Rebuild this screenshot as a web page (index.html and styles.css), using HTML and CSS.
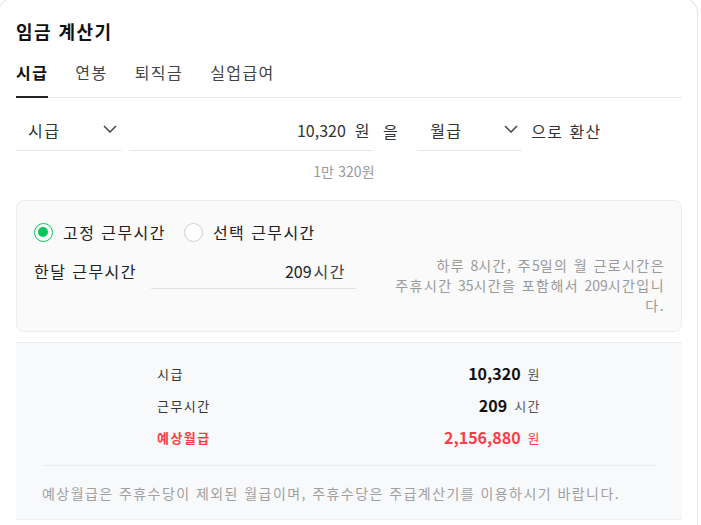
FILE: index.html
```html
<!DOCTYPE html>
<html lang="ko">
<head>
<meta charset="utf-8">
<title>임금 계산기</title>
<link rel="stylesheet" href="styles.css">
</head>
<body>
<div class="card">
  <h1 class="title">임금 계산기</h1>
  <nav class="tabs">
    <span class="tab active">시급</span>
    <span class="tab">연봉</span>
    <span class="tab">퇴직금</span>
    <span class="tab">실업급여</span>
  </nav>

  <div class="convert">
    <div class="select sel-from">
      <span>시급</span>
      <svg class="chev" width="14" height="8" viewBox="0 0 14 8"><path d="M1 1 L7 7 L13 1" fill="none" stroke="#444" stroke-width="1.5"/></svg>
    </div>
    <div class="amount">
      <span class="num">10,320</span>
      <span class="unit">원</span>
    </div>
    <span class="particle">을</span>
    <div class="select sel-to">
      <span>월급</span>
      <svg class="chev" width="14" height="8" viewBox="0 0 14 8"><path d="M1 1 L7 7 L13 1" fill="none" stroke="#444" stroke-width="1.5"/></svg>
    </div>
    <span class="suffix">으로 환산</span>
  </div>
  <div class="korean"><span class="num">1</span>만 <span class="num">320</span>원</div>

  <div class="hours">
    <div class="radios">
      <label class="radio"><span class="dot on"></span>고정 근무시간</label>
      <label class="radio"><span class="dot"></span>선택 근무시간</label>
    </div>
    <div class="hours-row">
      <span class="hours-label">한달 근무시간</span>
      <div class="hours-input">
        <span class="num">209</span>
        <span class="unit">시간</span>
      </div>
      <p class="help">하루 <span class="num">8</span>시간, 주<span class="num">5</span>일의 월 근로시간은<br>주휴시간 <span class="num">35</span>시간을 포함해서 <span class="num">209</span>시간입니다.</p>
    </div>
  </div>

  <div class="summary">
    <div class="rows">
      <div class="row"><span class="lbl">시급</span><span class="val">10,320</span><span class="u">원</span></div>
      <div class="row"><span class="lbl">근무시간</span><span class="val">209</span><span class="u">시간</span></div>
      <div class="row red"><span class="lbl">예상월급</span><span class="val">2,156,880</span><span class="u">원</span></div>
    </div>
    <p class="note">예상월급은 주휴수당이 제외된 월급이며, 주휴수당은 주급계산기를 이용하시기 바랍니다.</p>
  </div>
</div>
</body>
</html>
```

FILE: styles.css
```css
* { box-sizing: border-box; }
html, body { margin: 0; padding: 0; background: #fff; }
body {
  font-family: "Noto Sans CJK KR", "Noto Sans", sans-serif;
  color: #222;
  letter-spacing: 0.09em;
  overflow: hidden;
}
.num, .val { letter-spacing: 0; }
.card {
  margin: -3px 0 0 -2px;
  width: 700px;
  border: 1px solid #e6e6e6;
  border-bottom: none;
  border-radius: 16px 16px 0 0;
  padding: 20px 15px 0 17px;
  min-height: 540px;
}
.title {
  margin: 0;
  font-size: 18px;
  font-weight: 700;
  line-height: 26px;
  color: #111;
}
.tabs {
  display: flex;
  gap: 27px;
  border-bottom: 1px solid #ebebeb;
}
.tab {
  font-size: 16px;
  line-height: 24px;
  padding: 16px 0 12px;
  color: #444;
  border-bottom: 2px solid transparent;
  margin-bottom: -1px;
}
.tab.active {
  font-weight: 700;
  color: #111;
  border-bottom-color: #222;
}
.convert {
  display: flex;
  align-items: center;
  margin-top: 12px;
  font-size: 16px;
  color: #333;
}
.select {
  display: flex;
  align-items: center;
  justify-content: space-between;
  width: 105px;
  height: 41px;
  border-bottom: 1px solid #e8e8e8;
}
.sel-from { padding: 0 4px 0 12px; }
.sel-to { padding: 0 4px 0 13px; margin-left: 18px; }
.chev { margin-top: -3px; }
.amount {
  display: flex;
  align-items: center;
  justify-content: flex-end;
  width: 244px;
  height: 41px;
  margin-left: 8px;
  border-bottom: 1px solid #e8e8e8;
  padding-right: 2px;
}
.amount .unit { margin-left: 9px; }
.particle { margin-left: 10px; }
.suffix { margin-left: 9px; }
.korean {
  margin-top: 10px;
  font-size: 14px;
  line-height: 20px;
  text-align: center;
  padding-right: 10px;
  color: #999;
  letter-spacing: 0.02em;
}
.hours {
  margin-top: 19px;
  background: #fafafa;
  border: 1px solid #ececec;
  border-radius: 8px;
  padding: 20px 16px 16px 17px;
}
.radios {
  display: flex;
  gap: 18px;
  font-size: 16px;
  line-height: 22px;
}
.radio {
  display: flex;
  align-items: center;
  gap: 10px;
  color: #222;
}
.dot {
  width: 19px;
  height: 19px;
  border-radius: 50%;
  border: 1.5px solid #cfcfcf;
  background: #fff;
  position: relative;
}
.dot.on {
  border-color: #03c75a;
}
.dot.on::after {
  content: "";
  position: absolute;
  left: 3px;
  top: 3px;
  width: 10px;
  height: 10px;
  border-radius: 50%;
  background: #03c75a;
}
.hours-row {
  display: flex;
  align-items: flex-start;
  margin-top: 11px;
}
.hours-label {
  font-size: 16px;
  line-height: 34px;
  color: #222;
}
.hours-input {
  display: flex;
  align-items: center;
  justify-content: flex-end;
  width: 205px;
  height: 35px;
  margin-left: 14px;
  border-bottom: 1px solid #e3e3e3;
  padding-right: 10px;
  font-size: 16px;
}
.hours-input .num { color: #222; }
.hours-input .unit { margin-left: 2px; color: #444; }
.help {
  margin: 1px 0 0 auto;
  width: 280px;
  font-size: 14px;
  line-height: 20px;
  text-align: right;
  color: #999;
}
.summary {
  margin-top: 10px;
  background: #f8f9fb;
  border-top: 1px solid #eceef0;
  border-bottom: 1px solid #eceef0;
  padding: 14px 26px 15px;
}
.rows {
  width: 384px;
  margin: 0 auto;
  padding-bottom: 12px;
}
.row {
  display: flex;
  align-items: center;
  height: 32px;
}
.lbl {
  font-size: 13px;
  color: #333;
  margin-right: auto;
}
.val {
  font-size: 16px;
  font-weight: 700;
  color: #111;
}
.u {
  font-size: 13px;
  color: #555;
  margin-left: 7px;
}
.row.red .lbl, .row.red .val, .row.red .u {
  color: #fa3d46;
}
.row.red .lbl { font-weight: 700; }
.note {
  margin: 0;
  border-top: 1px solid #e9ebee;
  padding-top: 16px;
  font-size: 14px;
  line-height: 22px;
  color: #a0a0a0;
}
```
